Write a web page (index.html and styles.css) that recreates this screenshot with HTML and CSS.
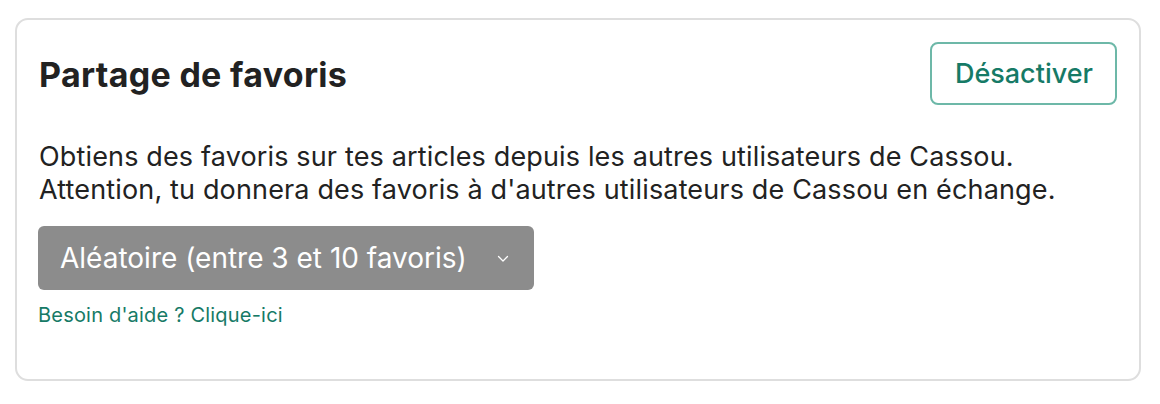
FILE: index.html
```html
<!DOCTYPE html>
<html lang="fr">
<head>
  <meta charset="UTF-8">
  <meta name="viewport" content="width=device-width, initial-scale=1.0">
  <title>Partage de favoris</title>
  <link rel="stylesheet" href="styles.css">
</head>
<body>
  <div class="card">
    <div class="card-header">
      <h2 class="title">Partage de favoris</h2>
      <button class="btn-outline">Désactiver</button>
    </div>
    <p class="desc">Obtiens des favoris sur tes articles depuis les autres utilisateurs de Cassou.<br>Attention, tu donnera des favoris à d'autres utilisateurs de Cassou en échange.</p>
    <div class="select">
      <span>Aléatoire (entre 3 et 10 favoris)</span>
      <svg class="chevron" width="12" height="8" viewBox="0 0 12 8"><path d="M1.5 1.5 L6 6 L10.5 1.5" fill="none" stroke="#fff" stroke-width="1.3" stroke-linecap="round" stroke-linejoin="round"/></svg>
    </div>
    <a class="help" href="#">Besoin d'aide ? Clique-ici</a>
  </div>
</body>
</html>
```

FILE: styles.css
```css
body {
  margin: 0;
  padding: 18px 19px 20px 15px;
  font-family: Inter, "Noto Sans", sans-serif;
  color: #222;
  background: #fff;
}

.card {
  border: 2px solid #dedede;
  border-radius: 13px;
  padding: 22px 22px 52px 21px;
}

.card-header {
  display: flex;
  justify-content: space-between;
  align-items: center;
}

.title {
  margin: 2px 0 0 1px;
  font-size: 34px;
  font-weight: 700;
  letter-spacing: 0.3px;
  color: #222;
}

.btn-outline {
  height: 63px;
  padding: 0 22px 0 23px;
  font-family: inherit;
  font-size: 27px;
  font-weight: 500;
  color: #167a66;
  background: #fff;
  border: 2px solid #6db8a8;
  border-radius: 8px;
  cursor: pointer;
}

.desc {
  margin: 35px 0 20px 1px;
  font-size: 27px;
  line-height: 33px;
  letter-spacing: 0.15px;
  color: #222;
}

.select {
  display: inline-flex;
  align-items: center;
  gap: 30px;
  height: 64px;
  padding: 0 25px 0 22px;
  font-size: 28px;
  color: #fff;
  background: #8c8c8c;
  border-radius: 6px;
}

.chevron {
  margin-top: 2px;
}

.help {
  display: block;
  margin-top: 13px;
  font-size: 20px;
  line-height: 24px;
  letter-spacing: 0.2px;
  color: #167a66;
  text-decoration: none;
}
```
